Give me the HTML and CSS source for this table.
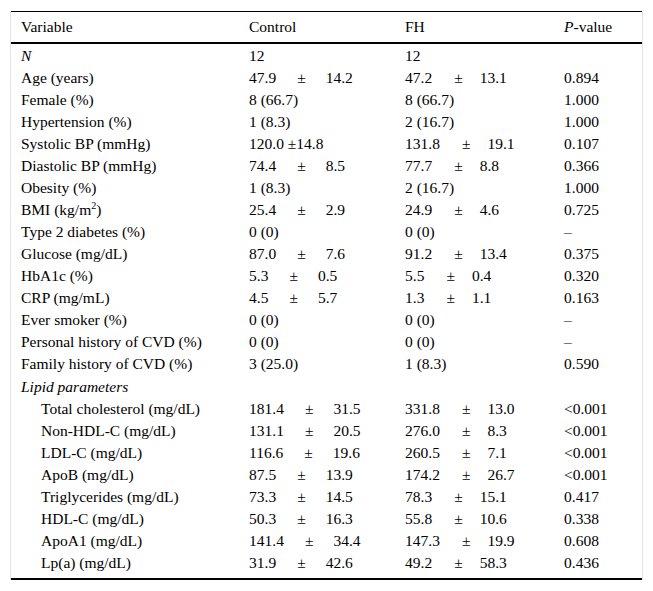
FILE: index.html
```html
<!DOCTYPE html>
<html>
<head>
<meta charset="utf-8">
<link rel="stylesheet" href="styles.css">
</head>
<body>
<div class="frame">
<table class="data">
<colgroup><col class="c1"><col class="c2"><col class="c3"><col class="c4"></colgroup>
<thead>
<tr><th>Variable</th><th>Control</th><th>FH</th><th><i>P</i>-value</th></tr>
</thead>
<tbody>
<tr><td><i>N</i></td><td>12</td><td>12</td><td></td></tr>
<tr><td>Age (years)</td><td>47.9<span class="pm">±</span>14.2</td><td>47.2<span class="pm">±</span>13.1</td><td>0.894</td></tr>
<tr><td>Female (%)</td><td>8 (66.7)</td><td>8 (66.7)</td><td>1.000</td></tr>
<tr><td>Hypertension (%)</td><td>1 (8.3)</td><td>2 (16.7)</td><td>1.000</td></tr>
<tr><td>Systolic BP (mmHg)</td><td>120.0 ±14.8</td><td>131.8<span class="pm">±</span>19.1</td><td>0.107</td></tr>
<tr><td>Diastolic BP (mmHg)</td><td>74.4<span class="pm">±</span>8.5</td><td>77.7<span class="pm">±</span>8.8</td><td>0.366</td></tr>
<tr><td>Obesity (%)</td><td>1 (8.3)</td><td>2 (16.7)</td><td>1.000</td></tr>
<tr><td>BMI (kg/m<sup>2</sup>)</td><td>25.4<span class="pm">±</span>2.9</td><td>24.9<span class="pm">±</span>4.6</td><td>0.725</td></tr>
<tr><td>Type 2 diabetes (%)</td><td>0 (0)</td><td>0 (0)</td><td>–</td></tr>
<tr><td>Glucose (mg/dL)</td><td>87.0<span class="pm">±</span>7.6</td><td>91.2<span class="pm">±</span>13.4</td><td>0.375</td></tr>
<tr><td>HbA1c (%)</td><td>5.3<span class="pm">±</span>0.5</td><td>5.5<span class="pm">±</span>0.4</td><td>0.320</td></tr>
<tr><td>CRP (mg/mL)</td><td>4.5<span class="pm">±</span>5.7</td><td>1.3<span class="pm">±</span>1.1</td><td>0.163</td></tr>
<tr><td>Ever smoker (%)</td><td>0 (0)</td><td>0 (0)</td><td>–</td></tr>
<tr><td>Personal history of CVD (%)</td><td>0 (0)</td><td>0 (0)</td><td>–</td></tr>
<tr><td>Family history of CVD (%)</td><td>3 (25.0)</td><td>1 (8.3)</td><td>0.590</td></tr>
<tr class="group"><td><i>Lipid parameters</i></td><td></td><td></td><td></td></tr>
<tr><td class="ind">Total cholesterol (mg/dL)</td><td>181.4<span class="pm">±</span>31.5</td><td>331.8<span class="pm">±</span>13.0</td><td>&lt;0.001</td></tr>
<tr><td class="ind">Non-HDL-C (mg/dL)</td><td>131.1<span class="pm">±</span>20.5</td><td>276.0<span class="pm">±</span>8.3</td><td>&lt;0.001</td></tr>
<tr><td class="ind">LDL-C (mg/dL)</td><td>116.6<span class="pm">±</span>19.6</td><td>260.5<span class="pm">±</span>7.1</td><td>&lt;0.001</td></tr>
<tr><td class="ind">ApoB (mg/dL)</td><td>87.5<span class="pm">±</span>13.9</td><td>174.2<span class="pm">±</span>26.7</td><td>&lt;0.001</td></tr>
<tr><td class="ind">Triglycerides (mg/dL)</td><td>73.3<span class="pm">±</span>14.5</td><td>78.3<span class="pm">±</span>15.1</td><td>0.417</td></tr>
<tr><td class="ind">HDL-C (mg/dL)</td><td>50.3<span class="pm">±</span>16.3</td><td>55.8<span class="pm">±</span>10.6</td><td>0.338</td></tr>
<tr><td class="ind">ApoA1 (mg/dL)</td><td>141.4<span class="pm">±</span>34.4</td><td>147.3<span class="pm">±</span>19.9</td><td>0.608</td></tr>
<tr><td class="ind">Lp(a) (mg/dL)</td><td>31.9<span class="pm">±</span>42.6</td><td>49.2<span class="pm">±</span>58.3</td><td>0.436</td></tr>
</tbody>
</table>
</div>
</body>
</html>
```

FILE: styles.css
```css
html, body {
  margin: 0;
  padding: 0;
  background: #ffffff;
}

body {
  font-family: "Liberation Serif", "Times New Roman", serif;
  font-size: 15.5px;
  color: #000000;
}

.frame {
  margin: 11px 0 0 10px;
  width: 631px;
  border-left: 1px solid #e3e3e3;
  border-right: 1px solid #e3e3e3;
}

.data {
  width: 100%;
  border-collapse: collapse;
  table-layout: fixed;
  border-top: 1px solid #000;
  border-bottom: 2px solid #000;
}

.c1 { width: 228px; }
.c2 { width: 156px; }
.c3 { width: 159px; }
.c4 { width: 88px; }

.data th {
  font-weight: normal;
  text-align: left;
  padding: 0 10px;
  height: 30px;
  line-height: 30px;
  border-bottom: 2px solid #000;
  white-space: nowrap;
}

.data td {
  padding: 0 10px;
  height: 22px;
  line-height: 22px;
  white-space: nowrap;
  vertical-align: middle;
}

.data tbody tr:first-child td {
  padding-top: 1px;
}

.data tbody tr.group td {
  padding-top: 1px;
}

.data tbody tr:last-child td {
  padding-bottom: 4px;
}

.data td.ind {
  padding-left: 30px;
}

.pm {
  margin: 0 20px 0 21px;
}

.data td:nth-child(3) .pm {
  margin: 0 17px 0 22px;
}

sup {
  font-size: 10px;
  line-height: 0;
  vertical-align: 6px;
}
```
